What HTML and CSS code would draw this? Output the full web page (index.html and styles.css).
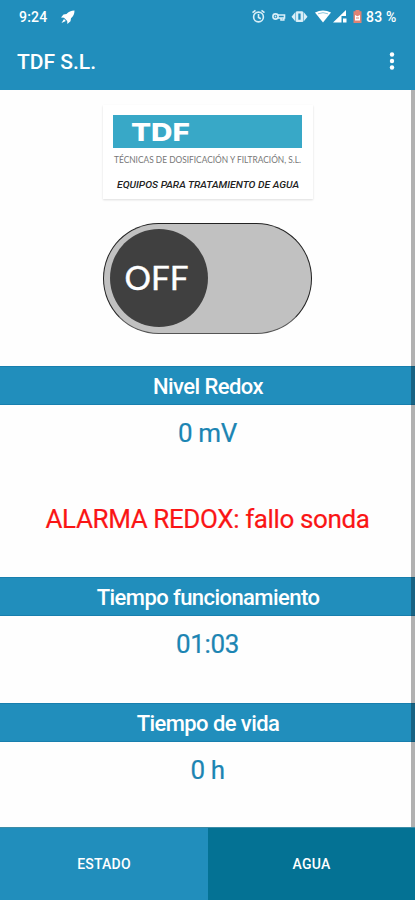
FILE: index.html
```html
<!DOCTYPE html>
<html lang="es">
<head>
<meta charset="utf-8">
<title>TDF S.L.</title>
<link rel="stylesheet" href="styles.css">
</head>
<body>
<div class="app">
  <header class="header">
    <div class="status">
      <span class="clock">9:24</span>
      <svg class="rocket" width="16" height="16" viewBox="0 0 16 16" fill="#fff"><path d="M14.500 1.500C11 1.500 8.500 2.700 6.500 5L3.500 5.500 1 8.500 4 8.800 7.200 12 7.400 15 10.500 12.300 11 9.300C13.300 7.300 14.500 5 14.500 1.500Z"/><path d="M4 10 1.500 14 5.800 12Z"/></svg>
      <svg class="tray" width="124" height="16" viewBox="0 0 124 16">
        <g fill="none" stroke="#d8eef7" stroke-width="1.600">
          <circle cx="7.500" cy="8" r="4.900"/><path d="M7.500 5V8.500L9.800 9.800M1.500 3.700 4.500 1.300M10.500 1.300 13.500 3.700"/>
          <circle cx="24.500" cy="7.500" r="2.600"/><path d="M27 6H33.500V9H27M30 9V11H32.800V9"/>
        </g>
        <circle cx="24.500" cy="7.500" r=".9" fill="#d8eef7"/>
        <g fill="#d8eef7"><rect x="44.500" y="2.200" width="8" height="10.800" rx="1.500"/><path d="M44 3.500V12L40.500 7.800ZM53 3.500V12L56.500 7.800Z"/></g>
        <rect x="47.300" y="4.500" width="2.300" height="6.200" fill="#218ebc"/>
        <g fill="#fff"><path d="M64 3.500Q72-.5 80 3.500L72 13.500Z"/><path d="M95 1V7H90.500V13.500H82Z"/><rect x="92" y="9.500" width="3.500" height="4"/></g>
        <path d="M67 4.800Q72 2.500 77 4.800" fill="none" stroke="#8bc7df" stroke-width="1"/>
        <g transform="translate(1 0)"><path d="M101.500 2.200H103.500V1H107.500V2.200H109.500V14H101.500Z" fill="#df8374"/><path d="M103 6 105.500 7.200 108 6V11.500H103Z" fill="#fff"/><path d="M104 9H107" stroke="#df8374"/></g>
      </svg>
      <span class="battery">83 %</span>
    </div>
    <div class="toolbar">
      <h1 class="title">TDF S.L.</h1>
      <svg width="6" height="20" viewBox="0 0 6 20" fill="#fff"><circle cx="3" cy="3.500" r="2.200"/><circle cx="3" cy="10" r="2.200"/><circle cx="3" cy="16.500" r="2.200"/></svg>
    </div>
  </header>
  <main class="content">
    <svg class="logo" width="210" height="94" viewBox="0 0 210 94">
      <rect class="logo-band" x="10" y="10" width="189" height="33"/>
      <text class="logo-name" x="28" y="35.500" textLength="59" lengthAdjust="spacingAndGlyphs">TDF</text>
      <text class="logo-line" x="11" y="57.500" textLength="187" lengthAdjust="spacingAndGlyphs">TÉCNICAS DE DOSIFICACIÓN Y FILTRACIÓN, S.L.</text>
      <text class="logo-motto" x="14" y="83" textLength="182" lengthAdjust="spacingAndGlyphs">EQUIPOS PARA TRATAMIENTO DE AGUA</text>
    </svg>
    <div class="switch"><svg class="knob" width="98" height="98" viewBox="0 0 98 98"><circle cx="49" cy="49" r="49" fill="#404040"/><text class="knob-text" x="14.500" y="61" textLength="64" lengthAdjust="spacingAndGlyphs">OFF</text></svg></div>
    <section class="section redox">
      <h2 class="bar">Nivel Redox</h2>
      <p class="value">0 mV</p>
      <p class="value alarm">ALARMA REDOX: fallo sonda</p>
    </section>
    <section class="section running">
      <h2 class="bar">Tiempo funcionamiento</h2>
      <p class="value">01:03</p>
    </section>
    <section class="section">
      <h2 class="bar">Tiempo de vida</h2>
      <p class="value">0 h</p>
    </section>
    <div class="scrollbar"></div>
  </main>
  <nav class="tabs"><span class="tab">ESTADO</span><span class="tab active">AGUA</span></nav>
</div>
</body>
</html>
```
FILE: styles.css
```css
* { box-sizing: border-box; }
body { margin: 0; font-family: Roboto, sans-serif; background: #fefefe; }
h1, h2, p { margin: 0; }
.app { width: 415px; height: 900px; display: flex; flex-direction: column; overflow: hidden; }
.header { height: 90px; background: #218ebc; color: #fff; flex: none; }
.status { height: 33px; padding: 0 18px 0 19px; display: flex; align-items: center; }
.clock { font-size: 14px; font-weight: 500; width: 41px; letter-spacing: .2px; }
.tray { margin-left: auto; }
.status .battery { font-size: 14px; font-weight: 500; width: 31px; margin-left: -9px; white-space: nowrap; letter-spacing: .2px; }
.toolbar { height: 56px; padding: 0 20px 0 17px; display: flex; align-items: center; justify-content: space-between; }
.title { font-size: 21px; font-weight: 500; line-height: 28px; padding-top: 1px; }
.content { position: relative; height: 737px; flex: none; display: flex; flex-direction: column; }
.logo { margin: 15px 0 0 103px; flex: none; background: #fff; box-shadow: 0 1px 2px #ddd; overflow: visible; }
.logo-band { fill: #38a8c7; }
.logo-name { font-family: Inter, sans-serif; font-weight: 800; font-size: 25px; fill: #fff; }
.logo-line { font-family: Lato, sans-serif; font-weight: 400; font-size: 10px; fill: #777; }
.logo-motto { font-family: Roboto, sans-serif; font-style: italic; font-weight: 500; font-size: 9.5px; fill: #222; }
.switch { width: 209px; height: 111px; margin: 24px 0 32px 103px; padding: 5px 5px 5px 6px; flex: none; border: 1.5px solid #222; border-bottom-color: #555; border-radius: 56px; background: #c1c1c1; }
.knob { display: block; }
.knob-text { font-family: Lato, sans-serif; font-size: 32px; fill: #fff; stroke: #fff; stroke-width: .4px; }
.section { height: 125.5px; flex: none; text-align: center; }
.redox { height: 211px; }
.bar { height: 39px; background: #218ebc; border: solid #187fae; border-width: 1px 0; color: #fff; font-size: 22px; line-height: 39px; font-weight: 500; letter-spacing: -.57px; padding-left: 1px; }
.value { font-size: 26px; line-height: 36px; margin-top: 10px; color: #1c85b3; -webkit-text-stroke: .2px currentColor; letter-spacing: -.38px; }
.alarm { margin-top: 50px; color: #fa1515; }
.scrollbar { position: absolute; right: 0; top: 0; width: 4px; height: 100%; background: rgba(0, 0, 0, .3); }
.tabs { height: 73px; display: grid; grid-template-columns: 208px 1fr; border-top: 1px solid #3c8ca7; }
.tab { display: flex; align-items: center; justify-content: center; background: #218ebc; color: #fff; font-size: 14px; font-weight: 500; letter-spacing: .2px; }
.active { background: #047294; }
```
